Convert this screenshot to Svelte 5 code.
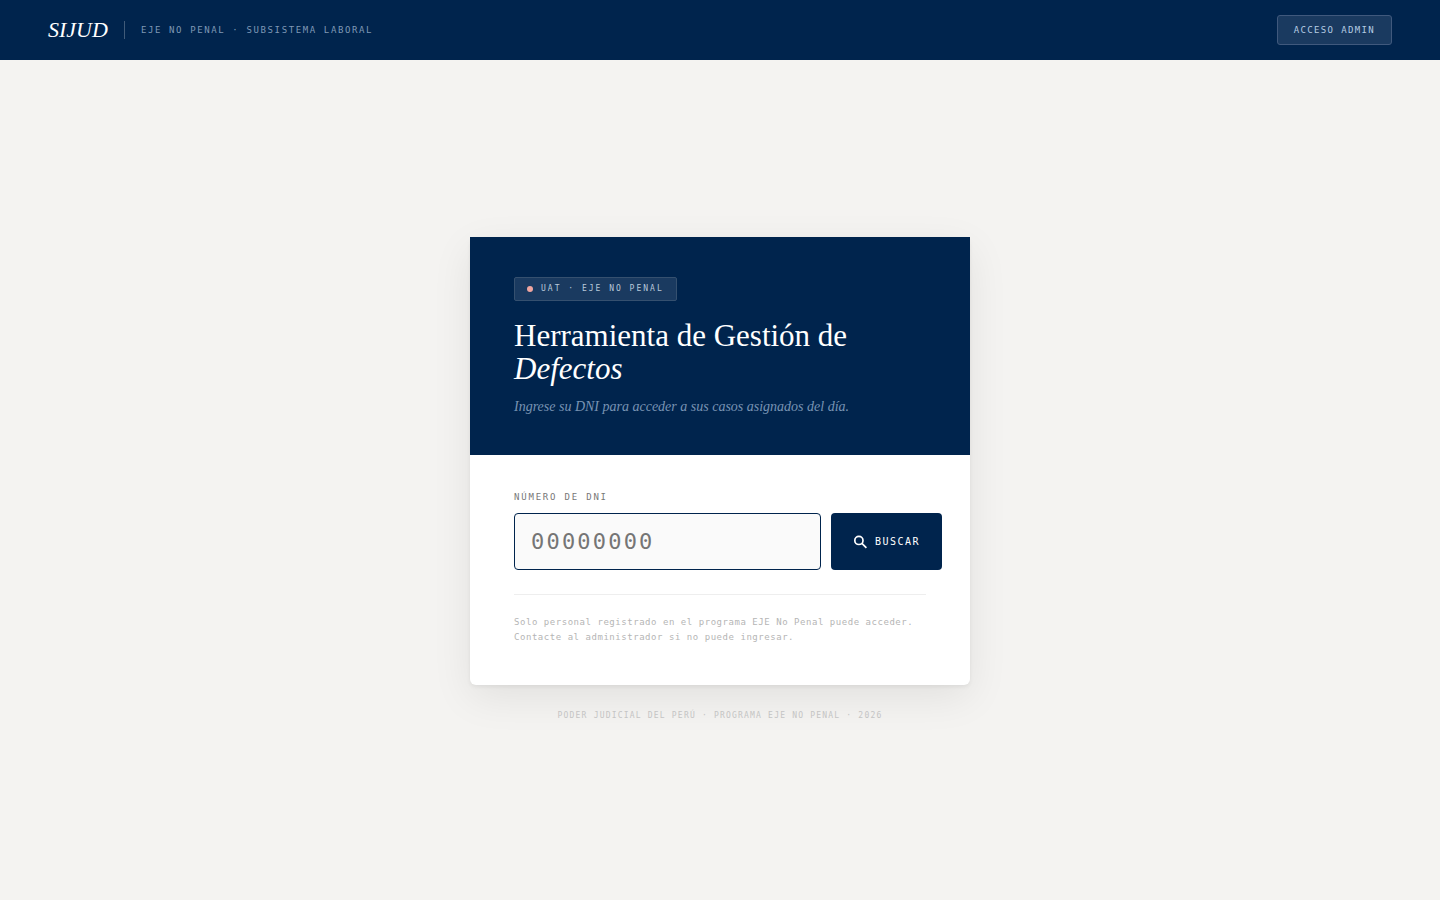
<script lang="ts">
    let dni = $state('');

    function buscar(event: SubmitEvent) {
        event.preventDefault();
        dni = dni.trim();
    }
</script>

<div class="page">
    <header class="topbar">
        <div class="brand">
            <span class="logo">SIJUD</span>
            <span class="divider"></span>
            <span class="subsystem">EJE NO PENAL · SUBSISTEMA LABORAL</span>
        </div>
        <button class="admin" type="button">ACCESO ADMIN</button>
    </header>

    <main>
        <section class="card">
            <div class="card-head">
                <div class="badge"><span class="dot"></span>UAT · EJE NO PENAL</div>
                <h1>Herramienta de Gestión de <em>Defectos</em></h1>
                <p>Ingrese su DNI para acceder a sus casos asignados del día.</p>
            </div>
            <div class="card-body">
                <label for="dni">NÚMERO DE DNI</label>
                <form onsubmit={buscar}>
                    <input id="dni" type="text" inputmode="numeric" maxlength="8" placeholder="00000000" bind:value={dni} />
                    <button class="search" type="submit">
                        <svg width="14" height="14" viewBox="0 0 14 14" aria-hidden="true">
                            <circle cx="5.9" cy="5.4" r="4.1" />
                            <path d="M8.9 8.4L13.4 12.9" />
                        </svg>
                        BUSCAR
                    </button>
                </form>
                <p class="note">
                    Solo personal registrado en el programa EJE No Penal puede acceder.<br />
                    Contacte al administrador si no puede ingresar.
                </p>
            </div>
        </section>
        <footer>PODER JUDICIAL DEL PERÚ · PROGRAMA EJE NO PENAL · 2026</footer>
    </main>
</div>

<style>
    :global(body) {
        margin: 0;
        background: #f4f3f1;
    }

    .page {
        --navy: #00244d;
        --serif: 'Liberation Serif', serif;
        --mono: 'DejaVu Sans Mono', 'Liberation Mono', monospace;
        display: flex;
        flex-direction: column;
        min-height: 100vh;
        background: #f4f3f1;
        font-family: var(--mono);
    }

    .topbar {
        display: flex;
        align-items: center;
        justify-content: space-between;
        box-sizing: border-box;
        height: 60px;
        padding: 0 48px;
        background: var(--navy);
    }

    .brand {
        display: flex;
        align-items: center;
        gap: 16px;
    }

    .logo {
        font-family: var(--serif);
        font-size: 22px;
        line-height: 28px;
        font-style: italic;
        font-weight: 300;
        color: white;
    }

    .divider {
        width: 1px;
        height: 18px;
        background: rgba(255, 255, 255, 0.25);
    }

    .subsystem {
        font-size: 9px;
        line-height: 12px;
        letter-spacing: 0.18em;
        color: #7f98b5;
    }

    .admin {
        padding: 8px 16px;
        border: 1px solid #40597d;
        border-radius: 3px;
        background: #1a3a60;
        font-family: var(--mono);
        font-size: 9px;
        line-height: 12px;
        letter-spacing: 0.15em;
        color: #b5cce3;
        cursor: pointer;
    }

    main {
        display: flex;
        flex: 1;
        flex-direction: column;
        align-items: center;
        justify-content: center;
        gap: 24px;
    }

    .card {
        width: 100%;
        max-width: 500px;
        border-radius: 6px;
        background: white;
        box-shadow:
            0 2px 4px rgba(0, 0, 0, 0.06),
            0 12px 40px rgba(0, 0, 0, 0.08);
    }

    .card-head {
        padding: 40px 44px 36px;
        background: var(--navy);
    }

    .badge {
        display: inline-flex;
        align-items: center;
        gap: 8px;
        padding: 5px 12px;
        border: 1px solid #35506f;
        border-radius: 2px;
        background: #1a3a60;
        font-size: 8px;
        line-height: 12px;
        letter-spacing: 0.25em;
        color: #b8c8da;
        vertical-align: top;
    }

    .dot {
        width: 6px;
        height: 6px;
        border-radius: 50%;
        background: #f0a5a0;
    }

    h1 {
        margin: 18px 0 10px;
        font-family: var(--serif);
        font-size: 31px;
        line-height: 33px;
        font-weight: 300;
        color: white;
    }

    .card-head p {
        margin: 0;
        font-family: var(--serif);
        font-size: 14px;
        line-height: 24px;
        font-style: italic;
        color: #7893b3;
    }

    .card-body {
        padding: 36px 44px 40px;
    }

    label {
        display: block;
        margin-bottom: 10px;
        font-size: 9px;
        line-height: 12px;
        letter-spacing: 0.2em;
        color: #777777;
    }

    form {
        display: flex;
        gap: 10px;
    }

    input {
        flex: 1;
        box-sizing: border-box;
        min-width: 307px;
        padding: 14px 16px;
        border: 1px solid var(--navy);
        border-radius: 4px;
        outline: none;
        background: #fafafa;
        font-family: var(--mono);
        font-size: 22px;
        line-height: 27px;
        letter-spacing: 0.1em;
        color: var(--navy);
    }

    input::placeholder {
        color: #757575;
    }

    .search {
        display: flex;
        flex-shrink: 0;
        align-items: center;
        gap: 8px;
        padding: 0 22px;
        border: none;
        border-radius: 4px;
        background: var(--navy);
        font-family: var(--mono);
        font-size: 10px;
        letter-spacing: 0.15em;
        color: white;
        cursor: pointer;
    }

    svg {
        fill: none;
        stroke: white;
        stroke-width: 1.7;
    }

    .note {
        margin: 24px 0 0;
        padding-top: 20px;
        border-top: 1px solid #eeeeee;
        font-size: 9px;
        line-height: 15px;
        letter-spacing: 0.06em;
        color: #b5b5b5;
    }

    footer {
        font-size: 8px;
        line-height: 14px;
        letter-spacing: 0.15em;
        color: #c4c4c4;
    }
</style>
